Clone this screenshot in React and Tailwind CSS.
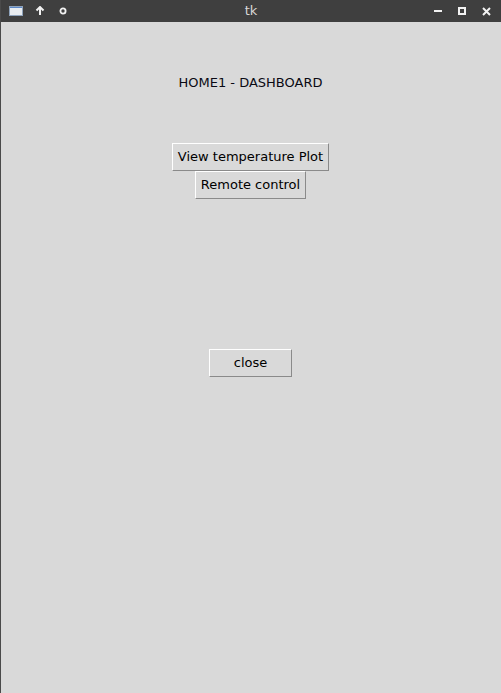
import React from "react";

function TitleBar() {
    return (
        <div className="h-[22px] bg-[#3f3f3f] flex items-center relative">
            <div className="flex items-center">
                <svg width="14" height="10" viewBox="0 0 14 10" className="ml-[8px]">
                    <rect x="0" y="0" width="14" height="10" fill="#e8ecf0" />
                    <rect x="0" y="0" width="14" height="2" fill="#5b87c7" />
                    <rect x="0.5" y="0.5" width="13" height="9" fill="none" stroke="#8fa3bb" />
                </svg>
                <svg width="10" height="10" viewBox="0 0 10 10" className="ml-[12px]">
                    <path d="M5 1 L5 9 M1.5 4.5 L5 1 L8.5 4.5" stroke="#f2f2f2" strokeWidth="2" fill="none" />
                </svg>
                <svg width="8" height="8" viewBox="0 0 8 8" className="ml-[14px]">
                    <circle cx="4" cy="4" r="2.6" stroke="#f2f2f2" strokeWidth="1.8" fill="none" />
                </svg>
            </div>
            <div className="absolute left-0 right-0 top-0 h-[22px] flex items-center justify-center pointer-events-none">
                <span className="text-[13px] text-[#d8d8d8] font-['DejaVu_Sans',sans-serif]">tk</span>
            </div>
            <div className="ml-auto flex items-center">
                <svg width="8" height="8" viewBox="0 0 8 8" className="mr-[16px]">
                    <rect x="0" y="3" width="8" height="2" fill="#f2f2f2" />
                </svg>
                <svg width="8" height="8" viewBox="0 0 8 8" className="mr-[16px]">
                    <rect x="1" y="1" width="6" height="6" stroke="#f2f2f2" strokeWidth="2" fill="none" />
                </svg>
                <svg width="9" height="9" viewBox="0 0 9 9" className="mr-[10px]">
                    <path d="M1 1 L8 8 M8 1 L1 8" stroke="#f2f2f2" strokeWidth="2" />
                </svg>
            </div>
        </div>
    );
}

function TkButton({ width, children, className = "" }) {
    return (
        <button
            className={`h-[28px] pb-[2px] bg-[#d9d9d9] border border-t-white border-l-white border-b-[#8a8a8a] border-r-[#8a8a8a] text-[13px] text-black leading-none ${width} ${className}`}
        >
            {children}
        </button>
    );
}

export default function App() {
    return (
        <div className="w-[501px] h-[693px] bg-[#d9d9d9] flex flex-col font-['DejaVu_Sans',sans-serif] border-l border-l-[#4a4a4a] overflow-hidden">
            <TitleBar />
            <div className="flex flex-col items-center pt-[52px] pr-[1px]">
                <div className="h-[17px] flex items-center text-[13px] text-[#0a0a14]">
                    HOME1 - DASHBOARD
                </div>
                <TkButton width="w-[157px]" className="mt-[52px]">
                    View temperature Plot
                </TkButton>
                <TkButton width="w-[111px]">Remote control</TkButton>
                <TkButton width="w-[83px]" className="mt-[150px]">
                    close
                </TkButton>
            </div>
        </div>
    );
}
